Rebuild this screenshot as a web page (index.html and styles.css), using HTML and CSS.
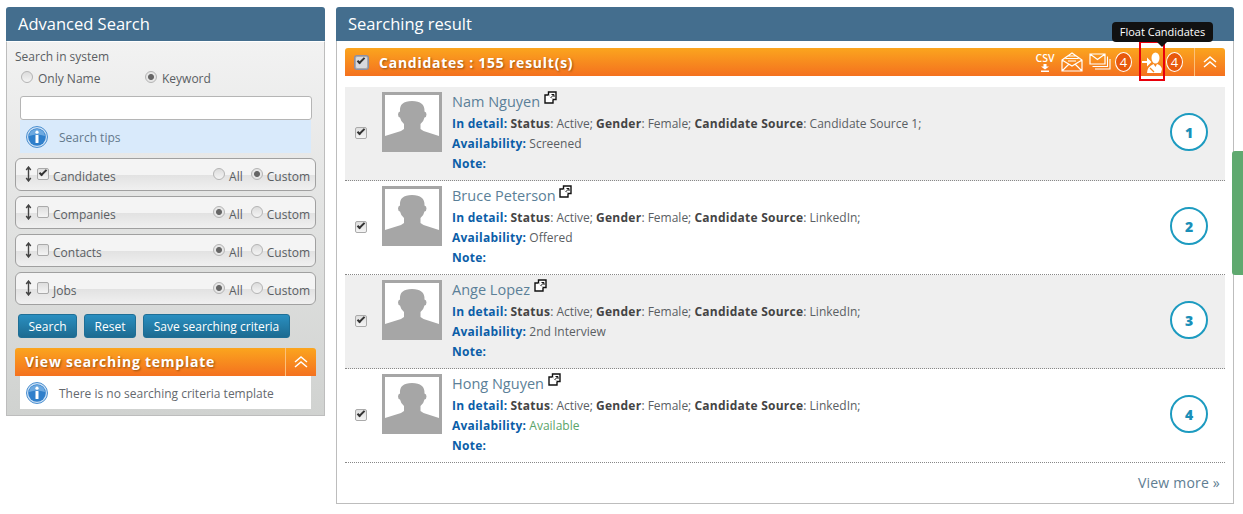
FILE: index.html
```html
<!DOCTYPE html>
<html lang="en">
<head>
    <meta charset="UTF-8">
    <title>Advanced Search</title>
    <link rel="stylesheet" href="styles.css">
</head>
<body>
    <svg class="defs" width="0" height="0">
        <symbol id="info" viewBox="0 0 22 22">
            <circle cx="11" cy="11" r="10.5" fill="#cfe2f5" stroke="#4a8fd0" stroke-width="1"/>
            <circle cx="11" cy="11" r="8.800" fill="#2f7fcb"/>
            <path d="M3 10a8 7 0 0 1 16 0q-8-3-16 0z" fill="#6da9e0"/>
            <circle cx="11" cy="6.200" r="1.600" fill="#fff"/>
            <rect x="9.500" y="9" width="3" height="8" rx=".6" fill="#fff"/>
        </symbol>
        <symbol id="avatar" viewBox="0 0 54 54">
            <path d="M0 54V41l16-5 3-2v-5q-3-2-4-6.500-2-.5-2-3t2-3Q14 6 27 6t12.500 10.500q2 .5 2 3t-2 3q-1 4.500-4 6.500v5l3 2L54 41v13z" fill="#a6a6a6"/>
        </symbol>
        <symbol id="popout" viewBox="0 0 13 13">
            <path d="M4.500 1h7.500v7.500h-7.500z" fill="#fff" stroke="#111" stroke-width="1.400"/>
            <path d="M4 4H1v8h8V9" fill="#fff" stroke="#111" stroke-width="1.400"/>
            <path d="M6.500 7l3-3M7.500 3.500h2.500V6" fill="none" stroke="#111"/>
        </symbol>
        <symbol id="collapse" viewBox="0 0 14 12">
            <path d="M1 6l6-5 6 5M1 11l6-5 6 5" fill="none" stroke="#fff" stroke-width="1.500"/>
        </symbol>
        <symbol id="updown" viewBox="0 0 7 16">
            <path d="M3.500 1v14M1.200 4l2.300-3 2.300 3M1.200 12l2.300 3 2.300-3" fill="none" stroke="#444" stroke-width="1.400"/>
        </symbol>
    </svg>

    <div class="page">
        <!-- left column -->
        <section class="panel search-panel">
            <h2 class="panel-title">Advanced Search</h2>
            <div class="search-body">
                <div class="search-label">Search in system</div>
                <div class="search-mode">
                    <label class="radio-item mode-name"><span class="radio"></span>Only Name</label>
                    <label class="radio-item"><span class="radio on"></span>Keyword</label>
                </div>
                <input type="text" class="search-input">
                <div class="tips">
                    <svg class="info-icon"><use href="#info"/></svg>
                    <span class="tips-text">Search tips</span>
                </div>

                <div class="filter">
                    <svg class="updown"><use href="#updown"/></svg>
                    <span class="check on"></span>
                    <span class="filter-name">Candidates</span>
                    <span class="radio"></span><span class="opt opt-all">All</span>
                    <span class="radio on"></span><span class="opt">Custom</span>
                </div>
                <div class="filter">
                    <svg class="updown"><use href="#updown"/></svg>
                    <span class="check"></span>
                    <span class="filter-name">Companies</span>
                    <span class="radio on"></span><span class="opt opt-all">All</span>
                    <span class="radio"></span><span class="opt">Custom</span>
                </div>
                <div class="filter">
                    <svg class="updown"><use href="#updown"/></svg>
                    <span class="check"></span>
                    <span class="filter-name">Contacts</span>
                    <span class="radio on"></span><span class="opt opt-all">All</span>
                    <span class="radio"></span><span class="opt">Custom</span>
                </div>
                <div class="filter">
                    <svg class="updown"><use href="#updown"/></svg>
                    <span class="check"></span>
                    <span class="filter-name">Jobs</span>
                    <span class="radio on"></span><span class="opt opt-all">All</span>
                    <span class="radio"></span><span class="opt">Custom</span>
                </div>

                <div class="buttons">
                    <button class="btn btn-search">Search</button>
                    <button class="btn btn-reset">Reset</button>
                    <button class="btn btn-save">Save searching criteria</button>
                </div>

                <div class="orange-bar template-bar">
                    <span class="bar-title">View searching template</span>
                    <span class="bar-toggle"><svg class="chevrons"><use href="#collapse"/></svg></span>
                </div>
                <div class="template-box">
                    <svg class="info-icon"><use href="#info"/></svg>
                    <span class="tips-text">There is no searching criteria template</span>
                </div>
            </div>
        </section>

        <!-- right column -->
        <section class="panel result-panel">
            <h2 class="panel-title">Searching result</h2>
            <div class="result-body">
                <div class="orange-bar result-bar">
                    <span class="check on bar-check"></span>
                    <span class="bar-title">Candidates : 155 result(s)</span>
                    <div class="bar-tools">
                        <span class="csv">CSV
                            <svg width="10" height="8" viewBox="0 0 10 8"><path d="M3.500 0h3v2.500h2.500L5 5.500 1 2.500h2.500zM1 6.500h8V8H1z" fill="#fff"/></svg>
                        </span>
                        <svg class="tool-mail" width="22" height="20" viewBox="0 0 22 20">
                            <path d="M1 8l10-7 10 7v11H1zM1 8l10 6 10-6M1 19l7-7M21 19l-7-7M4.500 6.500h13M7 4h8M7 9h8" fill="none" stroke="#fff" stroke-width="1.200"/>
                        </svg>
                        <svg class="tool-mails" width="22" height="18" viewBox="0 0 22 18">
                            <path d="M1 1h15v10H1zM1 1l7.500 5.500L16 1" fill="none" stroke="#fff" stroke-width="1.200"/>
                            <path d="M18.500 3.500v10H3.500M21 6v10H6" fill="none" stroke="#fff" stroke-width="1.100"/>
                        </svg>
                        <span class="count">4</span>
                        <svg class="tool-float" width="20" height="21" viewBox="0 0 20 21">
                            <path d="M0 9h5V5.500l4.500 4.500L5 14.500V11H0z" fill="#fff"/>
                            <ellipse cx="13.500" cy="6" rx="4" ry="5.500" fill="#fff"/>
                            <path d="M5 21q0-6 6.500-9l2 3 1.500-3q4 1 5 5l-1 4z" fill="#fff"/>
                            <path d="M8 16l4 4" stroke="#f58a1f" stroke-width="1.200"/>
                        </svg>
                        <span class="count">4</span>
                        <span class="bar-toggle"><svg class="chevrons"><use href="#collapse"/></svg></span>
                    </div>
                </div>

                <div class="rows">
                    <div class="row">
                        <span class="check on"></span>
                        <div class="photo"><svg><use href="#avatar"/></svg></div>
                        <div class="info">
                            <div class="name">Nam Nguyen <svg class="popout"><use href="#popout"/></svg></div>
                            <div class="line"><b class="key">In detail:</b> <b>Status</b>: Active; <b>Gender</b>: Female; <b>Candidate Source</b>: Candidate Source 1;</div>
                            <div class="line"><b class="key">Availability:</b> Screened</div>
                            <div class="line"><b class="key">Note:</b></div>
                        </div>
                        <span class="num">1</span>
                    </div>
                    <div class="row">
                        <span class="check on"></span>
                        <div class="photo"><svg><use href="#avatar"/></svg></div>
                        <div class="info">
                            <div class="name">Bruce Peterson <svg class="popout"><use href="#popout"/></svg></div>
                            <div class="line"><b class="key">In detail:</b> <b>Status</b>: Active; <b>Gender</b>: Female; <b>Candidate Source</b>: LinkedIn;</div>
                            <div class="line"><b class="key">Availability:</b> Offered</div>
                            <div class="line"><b class="key">Note:</b></div>
                        </div>
                        <span class="num">2</span>
                    </div>
                    <div class="row">
                        <span class="check on"></span>
                        <div class="photo"><svg><use href="#avatar"/></svg></div>
                        <div class="info">
                            <div class="name">Ange Lopez <svg class="popout"><use href="#popout"/></svg></div>
                            <div class="line"><b class="key">In detail:</b> <b>Status</b>: Active; <b>Gender</b>: Female; <b>Candidate Source</b>: LinkedIn;</div>
                            <div class="line"><b class="key">Availability:</b> 2nd Interview</div>
                            <div class="line"><b class="key">Note:</b></div>
                        </div>
                        <span class="num">3</span>
                    </div>
                    <div class="row">
                        <span class="check on"></span>
                        <div class="photo"><svg><use href="#avatar"/></svg></div>
                        <div class="info">
                            <div class="name">Hong Nguyen <svg class="popout"><use href="#popout"/></svg></div>
                            <div class="line"><b class="key">In detail:</b> <b>Status</b>: Active; <b>Gender</b>: Female; <b>Candidate Source</b>: LinkedIn;</div>
                            <div class="line"><b class="key">Availability:</b> <span class="available">Available</span></div>
                            <div class="line"><b class="key">Note:</b></div>
                        </div>
                        <span class="num">4</span>
                    </div>
                </div>

                <div class="view-more">View more »</div>
            </div>
        </section>
    </div>

    <!-- overlays -->
    <div class="red-box"></div>
    <div class="tooltip">Float Candidates</div>
    <div class="side-tab"></div>
</body>
</html>
```

FILE: styles.css
```css
html, body {
    margin: 0;
    padding: 0;
    height: 514px;
    overflow: hidden;
    background: #fff;
}
body {
    font-family: "Open Sans", sans-serif;
    font-size: 12px;
    color: #5a5e63;
    position: relative;
}
.defs {
    position: absolute;
}
.page {
    display: flex;
    align-items: flex-start;
    gap: 11px;
    padding: 7px 9px 0 6px;
}
.panel-title {
    margin: 0;
    height: 34px;
    line-height: 34px;
    padding-left: 12px;
    background: #446e8e;
    border-radius: 3px 3px 0 0;
    color: #fff;
    font-size: 16.5px;
    font-weight: 400;
}

/* left */
.search-panel {
    width: 319px;
    flex: none;
}
.search-body {
    height: 375px;
    box-sizing: border-box;
    border: 1px solid #bdbdbd;
    border-top-color: #fff;
    padding: 7px 8px 0;
    background: linear-gradient(#f2f2f2, #d0d2d0);
}
.search-label {
    height: 16px;
    line-height: 16px;
}
.search-mode {
    display: flex;
    height: 26px;
    align-items: center;
    padding-left: 6px;
    margin-bottom: 5px;
}
.radio-item {
    display: flex;
    align-items: center;
}
.mode-name {
    width: 124px;
}
.radio {
    display: inline-block;
    flex: none;
    box-sizing: border-box;
    width: 12px;
    height: 12px;
    margin: -2px 5px 0 0;
    border: 1px solid #b4b4b4;
    border-radius: 50%;
    background: linear-gradient(#dcdcdc, #f4f4f4);
}
.radio.on {
    background: radial-gradient(circle, #666 0 2.5px, #e6e6e6 3.5px);
}
.search-input {
    display: block;
    box-sizing: border-box;
    width: 292px;
    height: 24px;
    margin-left: 5px;
    border: 1px solid #b5b5b5;
    border-radius: 3px;
    background: #fff;
}
.tips {
    display: flex;
    align-items: center;
    gap: 11px;
    width: 285px;
    height: 33px;
    margin: 0 0 5px 5px;
    padding-left: 6px;
    background: #d9eafb;
    color: #64798c;
}
.tips-text {
    padding-top: 2px;
}
.info-icon {
    width: 22px;
    height: 22px;
    flex: none;
}
.filter {
    display: flex;
    align-items: center;
    box-sizing: border-box;
    width: 301px;
    height: 33px;
    margin-bottom: 5px;
    padding: 0 5px 0 9px;
    border: 1px solid #a0a0a0;
    border-radius: 6px;
    background: linear-gradient(#f4f4f4 50%, #e2e2e2 52%, #f0f0f0 100%);
}
.filter .radio {
    margin-right: 4px;
}
.updown {
    width: 7px;
    height: 16px;
    margin: -1px 5px 0 0;
    flex: none;
}
.check {
    display: inline-block;
    flex: none;
    box-sizing: border-box;
    width: 12px;
    height: 12px;
    border: 1px solid #aaa;
    border-radius: 2px;
    background: linear-gradient(#dedede, #f4f4f4);
    position: relative;
}
.check.on::after {
    content: "";
    position: absolute;
    left: 1px;
    top: 1px;
    width: 6px;
    height: 2px;
    border-left: 2px solid #333;
    border-bottom: 2px solid #333;
    transform: rotate(-45deg);
}
.filter .check {
    margin-top: -2px;
}
.filter-name {
    flex: 1;
    margin-left: 4px;
    padding-top: 4px;
}
.opt {
    padding-top: 4px;
}
.opt-all {
    margin-right: 8px;
}
.buttons {
    display: flex;
    gap: 7px;
    padding: 4px 0 0 3px;
}
.btn {
    height: 24px;
    padding: 0;
    border: 1px solid #1f6f96;
    border-radius: 3px;
    background: linear-gradient(#2a8fc0, #1d6b91);
    color: #fff;
    font-family: inherit;
    font-size: 12px;
}
.btn-search { width: 59px; }
.btn-reset { width: 52px; }
.btn-save { width: 147px; }
.orange-bar {
    display: flex;
    align-items: center;
    height: 28px;
    background: linear-gradient(#fba51e, #f4711f);
    border-radius: 3px 3px 0 0;
}
.bar-title {
    color: #fff;
    font-weight: 700;
    font-size: 14px;
    letter-spacing: .75px;
    text-shadow: 1px 1px 2px rgba(90, 50, 0, .6);
}
.bar-toggle {
    display: flex;
    align-items: center;
    justify-content: center;
    width: 31px;
    height: 28px;
    border-left: 1px solid #fcc07a;
    box-sizing: border-box;
}
.chevrons {
    width: 14px;
    height: 12px;
}
.template-bar {
    width: 301px;
    margin-top: 10px;
    padding-left: 10px;
    box-sizing: border-box;
    justify-content: space-between;
}
.template-bar .bar-title {
    padding-bottom: 2px;
}
.template-box {
    display: flex;
    align-items: center;
    gap: 11px;
    width: 285px;
    height: 33px;
    margin-left: 5px;
    padding-left: 6px;
    background: #fff;
    color: #64696e;
}

/* right */
.result-panel {
    flex: 1;
}
.result-body {
    height: 463px;
    box-sizing: border-box;
    border: 1px solid #bdbdbd;
    border-top: none;
    padding: 7px 8px 0;
}
.result-bar {
    padding-left: 10px;
}
.bar-check {
    width: 13px;
    height: 13px;
    margin-right: 11px;
    background: #d9d9de;
    box-shadow: 0 0 0 1px #8b8fa8;
}
.bar-tools {
    margin-left: auto;
    display: flex;
    align-items: center;
}
.csv {
    display: flex;
    flex-direction: column;
    align-items: center;
    gap: 1px;
    width: 20px;
    margin-right: 6px;
    color: #fff;
    font-size: 10.5px;
    font-weight: 600;
    line-height: 10px;
}
.tool-mail { margin-right: 6px; }
.tool-mails { margin-right: 4px; }
.count {
    display: flex;
    align-items: center;
    justify-content: center;
    box-sizing: border-box;
    width: 17px;
    height: 20px;
    border: 1.5px solid #fff;
    border-radius: 50%;
    background: #e8590c;
    color: #fff;
    font-size: 13px;
}
.tool-float {
    margin: 0 4px 0 10px;
}
.bar-tools .bar-toggle {
    margin-left: 11px;
}
.rows {
    margin-top: 11px;
}
.row {
    display: flex;
    height: 94px;
    box-sizing: border-box;
    border-bottom: 1px dotted #888;
    padding-left: 10px;
}
.row:nth-child(odd) {
    background: #efefef;
}
.row > .check {
    margin-top: 40px;
}
.photo {
    width: 60px;
    height: 60px;
    box-sizing: border-box;
    margin: 5px 10px 0 15px;
    border: 3px solid #a6a6a6;
    background: #fff;
    flex: none;
}
.photo svg {
    display: block;
    width: 54px;
    height: 54px;
}
.info {
    flex: 1;
    padding-top: 4px;
}
.name {
    height: 23px;
    line-height: 22px;
    font-size: 14.5px;
    color: #5b7f98;
}
.popout {
    width: 13px;
    height: 13px;
    vertical-align: 3px;
}
.line {
    height: 20px;
    line-height: 20px;
}
.line b {
    color: #444;
    letter-spacing: .25px;
}
.line b.key {
    color: #0b5ea8;
}
.available {
    color: #5aa469;
}
.num {
    display: flex;
    align-items: center;
    justify-content: center;
    box-sizing: border-box;
    width: 38px;
    height: 38px;
    margin: 26px 17px 0 0;
    border: 2px solid #1d9bc0;
    border-radius: 50%;
    background: #fff;
    color: #1a8fb8;
    font-size: 14px;
    font-weight: 800;
}
.view-more {
    padding: 10px 5px 0 0;
    text-align: right;
    font-size: 14px;
    letter-spacing: .2px;
    color: #607d92;
}

/* overlays */
.tooltip {
    position: absolute;
    left: 1112px;
    top: 22px;
    width: 101px;
    height: 20px;
    line-height: 20px;
    border-radius: 4px;
    background: #111;
    color: #fff;
    font-size: 11px;
    text-align: center;
}
.tooltip::after {
    content: "";
    position: absolute;
    left: 45px;
    top: 20px;
    border: 5px solid transparent;
    border-top-color: #111;
    border-bottom: none;
}
.red-box {
    position: absolute;
    left: 1139px;
    top: 41px;
    width: 26px;
    height: 40px;
    box-sizing: border-box;
    border: 2px solid #e8000b;
}
.side-tab {
    position: absolute;
    left: 1232px;
    top: 151px;
    width: 11px;
    height: 124px;
    border-radius: 3px 0 0 3px;
    background: #5fa96f;
}
```
